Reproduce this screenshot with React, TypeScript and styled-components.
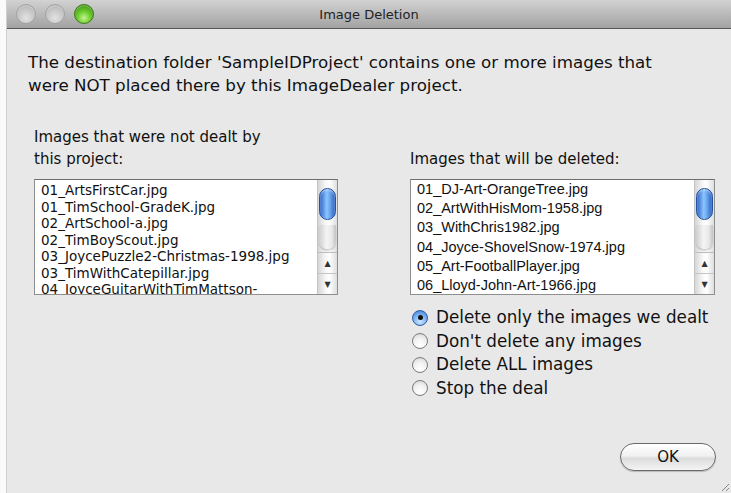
import React, { useState } from 'react';
import styled, { createGlobalStyle } from 'styled-components';

const GlobalStyle = createGlobalStyle`
  html, body {
    margin: 0;
    padding: 0;
    background: #fafafa;
  }
  #root {
    width: 731px;
    height: 493px;
    overflow: hidden;
  }
`;

const Window = styled.div`
  margin-left: 6px;
  height: 493px;
  display: flex;
  flex-direction: column;
  background: #e8e8e8;
  border-left: 1px solid #cfcfcf;
  font-family: 'DejaVu Sans', 'Liberation Sans', sans-serif;
  color: #111;
  position: relative;
`;

const TitleBar = styled.div`
  height: 28px;
  flex: 0 0 28px;
  display: flex;
  align-items: center;
  position: relative;
  background: linear-gradient(#d2d2d2, #a2a2a2);
  border-bottom: 1px solid #555;
`;

const Lights = styled.div`
  display: flex;
  gap: 9px;
  padding-left: 9px;
  position: relative;
  z-index: 1;
`;

const Light = styled.span<{ $green?: boolean }>`
  width: 20px;
  height: 20px;
  border-radius: 50%;
  box-sizing: border-box;
  border: 1px solid ${({ $green }) => ($green ? '#3c7a14' : '#a2a2a2')};
  background: ${({ $green }) =>
    $green
      ? 'radial-gradient(circle at 50% 72%, #c4f58a 0%, #6ccb2e 42%, #2f800c 100%)'
      : 'radial-gradient(circle at 50% 72%, #e2e2e2 0%, #c8c8c8 50%, #adadad 100%)'};
  box-shadow: inset 0 1px 1px rgba(255, 255, 255, 0.35);
`;

const Title = styled.div`
  position: absolute;
  left: 0;
  right: 0;
  text-align: center;
  font-size: 13px;
  color: #222;
`;

const Content = styled.div`
  flex: 1;
  display: flex;
  flex-direction: column;
  padding: 22px 15px 0 21px;
`;

const Message = styled.p`
  margin: 0;
  font-size: 16.7px;
  line-height: 23px;
`;

const Columns = styled.div`
  display: grid;
  grid-template-columns: 304px 305px;
  column-gap: 72px;
  margin-top: 29px;
  padding-left: 6px;
`;

const Label = styled.div`
  align-self: end;
  font-size: 15px;
  line-height: 22px;
  margin-bottom: 9px;
`;

const ListBox = styled.div`
  height: 116px;
  box-sizing: border-box;
  display: flex;
  background: #fff;
  border: 1px solid #8e8e8e;
  border-top-color: #6e6e6e;
`;

const Rows = styled.ul<{ $wide?: boolean }>`
  flex: 1;
  margin: 0;
  padding: ${({ $wide }) => ($wide ? '0 0 0 6px' : '2px 0 0 6px')};
  list-style: none;
  overflow: hidden;
  font-family: ${({ $wide }) =>
    $wide ? "'Liberation Sans', Arial, sans-serif" : "'DejaVu Sans', sans-serif"};
  font-size: ${({ $wide }) => ($wide ? '14.5px' : '13.5px')};
  line-height: ${({ $wide }) => ($wide ? '19.2px' : '16.5px')};
  white-space: nowrap;
`;

const ScrollBar = styled.div`
  width: 19px;
  display: flex;
  flex-direction: column;
  border-left: 1px solid #c4c4c4;
  background: linear-gradient(90deg, #d6d6d6, #f7f7f7 40%, #ffffff 60%, #dedede);
`;

const Track = styled.div`
  flex: 1;
  position: relative;
  border-bottom: 1px solid #bdbdbd;
`;

const TrackEnd = styled.div`
  position: absolute;
  left: 1px;
  right: 1px;
  bottom: 3px;
  height: 24px;
  border-radius: 0 0 9px 9px;
  background: linear-gradient(90deg, #cfcfcf, #f4f4f4 45%, #e8e8e8 75%, #c2c2c2);
  box-shadow: 0 2px 2px rgba(0, 0, 0, 0.18);
`;

const Thumb = styled.div`
  position: absolute;
  left: 1px;
  right: 1px;
  top: 8px;
  height: 30px;
  border-radius: 9px;
  border: 1px solid #2451a0;
  background: linear-gradient(90deg, #2c64c4, #8ec4ff 45%, #6aa9f2 65%, #2c5fbb);
  box-shadow: inset 0 1px 2px rgba(255, 255, 255, 0.6);
`;

const ArrowButton = styled.div`
  height: 20px;
  display: flex;
  align-items: center;
  justify-content: center;
  font-size: 8px;
  color: #333;
  & + & {
    border-top: 1px solid #c4c4c4;
  }
`;

const Radios = styled.div`
  display: flex;
  flex-direction: column;
  gap: 4px;
  margin-top: 13px;
  padding-left: 2px;
`;

const RadioRow = styled.label`
  display: flex;
  align-items: center;
  gap: 8px;
  font-size: 16.8px;
  line-height: 19.5px;
  cursor: default;
`;

const RadioDot = styled.span<{ $on?: boolean }>`
  width: 16px;
  height: 16px;
  flex: 0 0 16px;
  box-sizing: border-box;
  border-radius: 50%;
  display: flex;
  align-items: center;
  justify-content: center;
  border: 1px solid ${({ $on }) => ($on ? '#2d5ea8' : '#7d7d7d')};
  background: ${({ $on }) =>
    $on
      ? 'radial-gradient(circle at 50% 75%, #cfe7ff 0%, #7db4f0 50%, #3c78cf 100%)'
      : 'radial-gradient(circle at 50% 75%, #ffffff 0%, #f2f2f2 50%, #cfcfcf 100%)'};
  &::after {
    content: '';
    width: 5px;
    height: 5px;
    border-radius: 50%;
    background: #111;
    display: ${({ $on }) => ($on ? 'block' : 'none')};
  }
`;

const Footer = styled.div`
  display: flex;
  justify-content: flex-end;
  margin-top: auto;
  padding: 0 0 22px;
`;

const OkButton = styled.button`
  width: 96px;
  height: 28px;
  border-radius: 14px;
  border: 1px solid #6a6a6a;
  background: linear-gradient(#ffffff, #f1f1f1 45%, #dcdcdc 55%, #f4f4f4);
  box-shadow: 0 1px 1px rgba(0, 0, 0, 0.2);
  font-family: 'DejaVu Sans', sans-serif;
  font-size: 15px;
  color: #111;
  padding: 0;
`;

const Grip = styled.svg`
  position: absolute;
  right: 1px;
  bottom: 1px;
`;

const notDealt = [
  '01_ArtsFirstCar.jpg',
  '01_TimSchool-GradeK.jpg',
  '02_ArtSchool-a.jpg',
  '02_TimBoyScout.jpg',
  '03_JoycePuzzle2-Christmas-1998.jpg',
  '03_TimWithCatepillar.jpg',
  '04_JoyceGuitarWithTimMattson-',
];

const toDelete = [
  '01_DJ-Art-OrangeTree.jpg',
  '02_ArtWithHisMom-1958.jpg',
  '03_WithChris1982.jpg',
  '04_Joyce-ShovelSnow-1974.jpg',
  '05_Art-FootballPlayer.jpg',
  '06_Lloyd-John-Art-1966.jpg',
];

const choices = [
  'Delete only the images we dealt',
  "Don't delete any images",
  'Delete ALL images',
  'Stop the deal',
];

const FileList = ({ items, wide }: { items: string[]; wide?: boolean }) => (
  <ListBox>
    <Rows $wide={wide}>
      {items.map((name) => (
        <li key={name}>{name}</li>
      ))}
    </Rows>
    <ScrollBar>
      <Track>
        <TrackEnd />
        <Thumb />
      </Track>
      <ArrowButton>▲</ArrowButton>
      <ArrowButton>▼</ArrowButton>
    </ScrollBar>
  </ListBox>
);

export default function App() {
  const [choice, setChoice] = useState(0);

  return (
    <>
      <GlobalStyle />
      <Window>
        <TitleBar>
          <Lights>
            <Light />
            <Light />
            <Light $green />
          </Lights>
          <Title>Image Deletion</Title>
        </TitleBar>
        <Content>
          <Message>
            The destination folder 'SampleIDProject' contains one or more images that
            <br />
            were NOT placed there by this ImageDealer project.
          </Message>
          <Columns>
            <Label>
              Images that were not dealt by
              <br />
              this project:
            </Label>
            <Label>Images that will be deleted:</Label>
            <FileList items={notDealt} />
            <div>
              <FileList items={toDelete} wide />
              <Radios>
                {choices.map((text, i) => (
                  <RadioRow key={text} onClick={() => setChoice(i)}>
                    <RadioDot $on={choice === i} />
                    {text}
                  </RadioRow>
                ))}
              </Radios>
            </div>
          </Columns>
          <Footer>
            <OkButton>OK</OkButton>
          </Footer>
        </Content>
        <Grip width="10" height="10" viewBox="0 0 10 10">
          <path d="M9 2 L2 9 M9 6 L6 9" stroke="#8a8a8a" strokeWidth="1" />
        </Grip>
      </Window>
    </>
  );
}
